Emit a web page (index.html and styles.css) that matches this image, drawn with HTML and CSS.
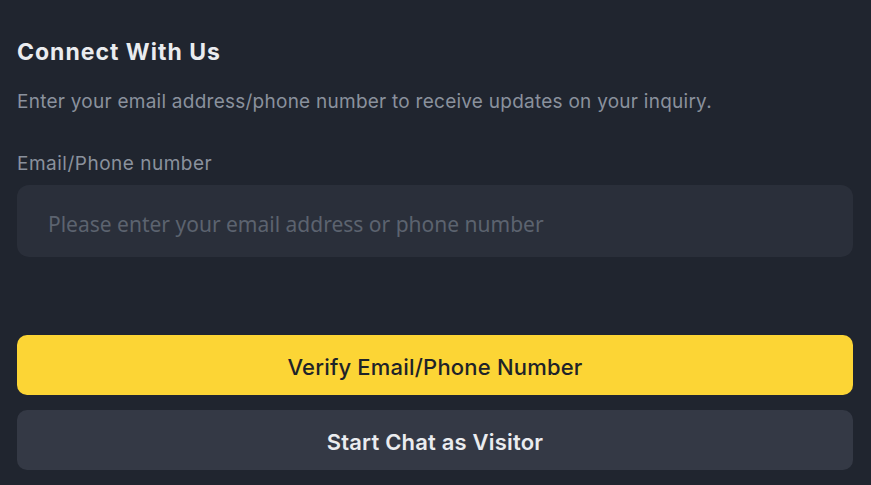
FILE: index.html
```html
<!DOCTYPE html>
<html lang="en">
<head>
<meta charset="utf-8">
<title>Connect With Us</title>
<link rel="stylesheet" href="styles.css">
</head>
<body>
<main class="panel">
  <h1 class="title">Connect With Us</h1>
  <p class="desc">Enter your email address/phone number to receive updates on your inquiry.</p>
  <label class="label" for="contact">Email/Phone number</label>
  <input class="field" id="contact" type="text" placeholder="Please enter your email address or phone number">
  <div class="actions">
    <button class="btn btn-primary" type="button">Verify Email/Phone Number</button>
    <button class="btn btn-secondary" type="button">Start Chat as Visitor</button>
  </div>
</main>
</body>
</html>
```

FILE: styles.css
```css
* { box-sizing: border-box; }
html, body {
  margin: 0;
  background: #20252f;
  height: 100%;
}
body {
  font-family: Inter, "Liberation Sans", sans-serif;
}
.panel {
  display: flex;
  flex-direction: column;
  padding: 37px 18px 0 17px;
}
.title {
  margin: 0;
  font-size: 23px;
  line-height: 30px;
  font-weight: 700;
  letter-spacing: 1px;
  color: #eaecef;
}
.desc {
  margin: 23px 0 0;
  font-size: 19px;
  line-height: 24px;
  letter-spacing: 0.25px;
  color: #8a919d;
}
.label {
  margin-top: 38px;
  font-size: 19px;
  line-height: 24px;
  letter-spacing: 0.5px;
  color: #8a919d;
}
.field {
  margin-top: 9px;
  height: 72px;
  border: none;
  border-radius: 12px;
  background: #2a2f3a;
  padding: 6px 31px 0;
  font-family: "Noto Sans", sans-serif;
  font-size: 21px;
  color: #eaecef;
  outline: none;
}
.field::placeholder { color: #5c636f; }
.actions {
  margin-top: 78px;
  display: flex;
  flex-direction: column;
  gap: 15px;
}
.btn {
  height: 60px;
  border: none;
  border-radius: 10px;
  padding: 3px 0 0;
  font-family: Inter, "Liberation Sans", sans-serif;
  font-size: 22px;
  letter-spacing: 0.2px;
  cursor: pointer;
}
.btn-primary {
  background: #fcd535;
  color: #1e2329;
  font-weight: 500;
}
.btn-secondary {
  background: #343945;
  color: #eaecef;
  font-weight: 600;
}
```
